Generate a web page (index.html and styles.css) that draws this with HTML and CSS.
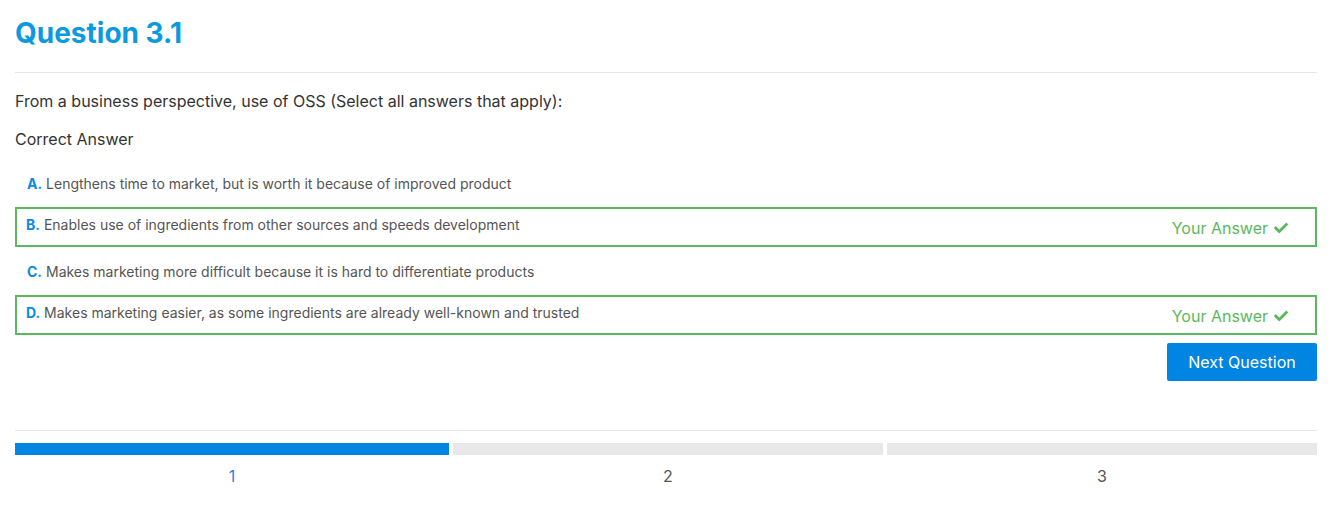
FILE: index.html
```html
<!DOCTYPE html>
<html lang="en">
<head>
<meta charset="utf-8">
<title>Question 3.1</title>
<link rel="stylesheet" href="styles.css">
</head>
<body>
<main class="quiz">
  <h1 class="quiz-title">Question 3.1</h1>
  <hr class="divider">
  <p class="question">From a business perspective, use of OSS (Select all answers that apply):</p>
  <p class="result">Correct Answer</p>
  <ul class="options">
    <li class="option"><span class="option-text"><b class="letter">A.</b> Lengthens time to market, but is worth it because of improved product</span></li>
    <li class="option selected"><span class="option-text"><b class="letter">B.</b> Enables use of ingredients from other sources and speeds development</span><span class="your-answer">Your Answer <svg class="check" viewBox="0 0 512 512" width="14" height="14"><path fill="currentColor" d="M173.9 439.4l-166.4-166.4c-10-10-10-26.2 0-36.2l36.2-36.2c10-10 26.2-10 36.2 0L192 312.7 432.1 72.6c10-10 26.2-10 36.2 0l36.2 36.2c10 10 10 26.2 0 36.2L210.1 439.4c-10 10-26.2 10-36.2 0z"/></svg></span></li>
    <li class="option"><span class="option-text"><b class="letter">C.</b> Makes marketing more difficult because it is hard to differentiate products</span></li>
    <li class="option selected"><span class="option-text"><b class="letter">D.</b> Makes marketing easier, as some ingredients are already well-known and trusted</span><span class="your-answer">Your Answer <svg class="check" viewBox="0 0 512 512" width="14" height="14"><path fill="currentColor" d="M173.9 439.4l-166.4-166.4c-10-10-10-26.2 0-36.2l36.2-36.2c10-10 26.2-10 36.2 0L192 312.7 432.1 72.6c10-10 26.2-10 36.2 0l36.2 36.2c10 10 10 26.2 0 36.2L210.1 439.4c-10 10-26.2 10-36.2 0z"/></svg></span></li>
  </ul>
  <div class="actions">
    <button class="btn-next" type="button">Next Question</button>
  </div>
  <hr class="divider divider-bottom">
  <div class="progress">
    <div class="step active"><div class="bar"></div><span class="num">1</span></div>
    <div class="step"><div class="bar"></div><span class="num">2</span></div>
    <div class="step"><div class="bar"></div><span class="num">3</span></div>
  </div>
</main>
</body>
</html>
```

FILE: styles.css
```css
* { box-sizing: border-box; }
html, body { margin: 0; padding: 0; background: #fff; }
body {
  font-family: Inter, "Noto Sans", sans-serif;
  color: #333;
}
.quiz {
  padding: 0 16px 0 15px;
}
.quiz-title {
  margin: 16px 0 0;
  font-size: 28px;
  line-height: 34px;
  font-weight: 700;
  color: #0b9ae0;
}
.divider {
  margin: 22px 0 0;
  border: 0;
  height: 1px;
  background: #e6e6e6;
}
.question {
  margin: 17px 0 0;
  font-size: 16px;
  line-height: 22px;
  color: #333;
}
.result {
  margin: 16px 0 0;
  font-size: 16px;
  line-height: 22px;
  color: #333;
}
.options {
  list-style: none;
  margin: 13px 0 0;
  padding: 0;
  display: flex;
  flex-direction: column;
  gap: 4px;
}
.option {
  height: 40px;
  border: 2px solid transparent;
  padding: 9px 27px 0 10px;
  display: flex;
  justify-content: space-between;
  align-items: flex-start;
  font-size: 14px;
  line-height: 20px;
  color: #555;
}
.option.selected {
  border-color: #5cb85c;
  padding-top: 6px;
  padding-left: 9px;
}
.letter {
  color: #0a8ae2;
  font-weight: 700;
}
.your-answer {
  align-self: center;
  margin-top: -5px;
  display: flex;
  align-items: center;
  gap: 6px;
  font-size: 16px;
  line-height: 22px;
  color: #5cb85c;
}
.check { display: block; }
.actions {
  display: flex;
  justify-content: flex-end;
  margin-top: 8px;
}
.btn-next {
  width: 150px;
  height: 38px;
  border: 0;
  border-radius: 2px;
  background: #0085e3;
  color: #fff;
  font-family: Inter, "Noto Sans", sans-serif;
  font-size: 16px;
  cursor: pointer;
}
.divider-bottom {
  margin-top: 49px;
}
.progress {
  display: grid;
  grid-template-columns: repeat(3, 1fr);
  margin-top: 12px;
}
.step {
  display: flex;
  flex-direction: column;
  align-items: center;
}
.step + .step {
  padding-left: 4px;
}
.bar {
  width: 100%;
  height: 12px;
  background: #e8e8e8;
}
.step.active .bar { background: #0085e3; }
.num {
  margin-top: 10px;
  font-size: 16px;
  line-height: 22px;
  color: #555;
}
.step.active .num { color: #2f7ddb; }
```
